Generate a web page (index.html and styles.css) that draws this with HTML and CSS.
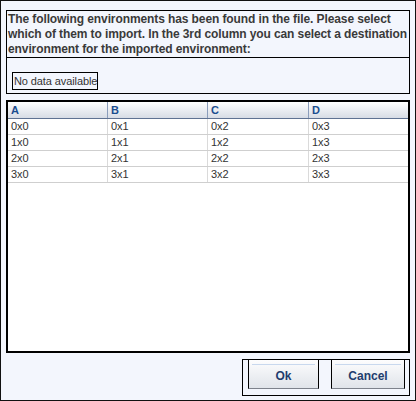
FILE: index.html
```html
<!DOCTYPE html>
<html>
<head>
<meta charset="utf-8">
<link rel="stylesheet" href="styles.css">
</head>
<body>
<div class="dialog">
  <div class="panel">
    <p class="msg">The following environments has been found in the file. Please select which of them to import. In the 3rd column you can select a destination environment for the imported environment:</p>
    <div class="panel-body"><span class="empty">No data available</span></div>
  </div>
  <div class="grid">
    <div class="row head"><div class="cell">A</div><div class="cell">B</div><div class="cell">C</div><div class="cell">D</div></div>
    <div class="row"><div class="cell">0x0</div><div class="cell">0x1</div><div class="cell">0x2</div><div class="cell">0x3</div></div>
    <div class="row"><div class="cell">1x0</div><div class="cell">1x1</div><div class="cell">1x2</div><div class="cell">1x3</div></div>
    <div class="row"><div class="cell">2x0</div><div class="cell">2x1</div><div class="cell">2x2</div><div class="cell">2x3</div></div>
    <div class="row"><div class="cell">3x0</div><div class="cell">3x1</div><div class="cell">3x2</div><div class="cell">3x3</div></div>
  </div>
  <div class="actions">
    <button class="btn">Ok</button>
    <button class="btn wide">Cancel</button>
  </div>
</div>
</body>
</html>
```
FILE: styles.css
```css
html, body {
  margin: 0;
  padding: 0;
  background: #ffffff;
}

.dialog {
  width: 416px;
  height: 401px;
  box-sizing: border-box;
  border: 1px solid #111111;
  background: #f3f6fd;
  padding: 9px 5px 0;
  display: flex;
  flex-direction: column;
}

.panel {
  border: 1px solid #000000;
}

.msg {
  margin: 0;
  padding: 1px 1px 0;
  font-family: "Liberation Sans", Arial, sans-serif;
  font-weight: bold;
  font-size: 12px;
  line-height: 15px;
  letter-spacing: -0.1px;
  color: #3a3a3a;
  border-bottom: 1px solid #000000;
}

.panel-body {
  height: 35px;
  box-sizing: border-box;
  padding: 14px 0 0 5px;
  display: flex;
  align-items: flex-start;
}

.empty {
  border: 1px solid #000000;
  padding: 0 0 0 1px;
  font-family: "Liberation Sans", Arial, sans-serif;
  font-size: 11px;
  line-height: 16px;
  letter-spacing: -0.1px;
  color: #333333;
}

.grid {
  margin-top: 6px;
  height: 253px;
  box-sizing: border-box;
  border: 2px solid #000000;
  background: #ffffff;
}

.row {
  display: grid;
  grid-template-columns: 100px 100px 101px 99px;
  border-bottom: 1px solid #cfcfcf;
}

.cell {
  padding-left: 3px;
  border-right: 1px solid #dadada;
  font-family: "Liberation Sans", Arial, sans-serif;
  font-size: 11px;
  line-height: 15px;
  color: #333333;
}

.cell:last-child {
  border-right: 0;
}

.head {
  background: linear-gradient(#ffffff, #d7dce5);
  border-bottom: 1px solid #5f7292;
}

.head .cell {
  line-height: 16px;
  font-weight: bold;
  color: #1a4d8f;
  border-right-color: #8b9dbb;
}

.actions {
  align-self: flex-end;
  margin-top: 6px;
  border: 1px solid #000000;
  display: flex;
  gap: 12px;
  padding: 0 4px 6px 5px;
}

.btn {
  width: 71px;
  height: 29px;
  box-sizing: border-box;
  margin: 0;
  border: 1px solid #000000;
  border-top: 0;
  border-bottom-color: #7d828c;
  padding: 3px 0 0;
  background:
    linear-gradient(#c8d8ee, #c8d8ee) no-repeat 3px 4px / calc(100% - 6px) 1px,
    linear-gradient(#fdfdfe, #e0e4ea);
  font-family: "Liberation Sans", Arial, sans-serif;
  font-weight: bold;
  font-size: 12px;
  color: #1f3d6e;
}

.btn.wide {
  width: 74px;
}
```
